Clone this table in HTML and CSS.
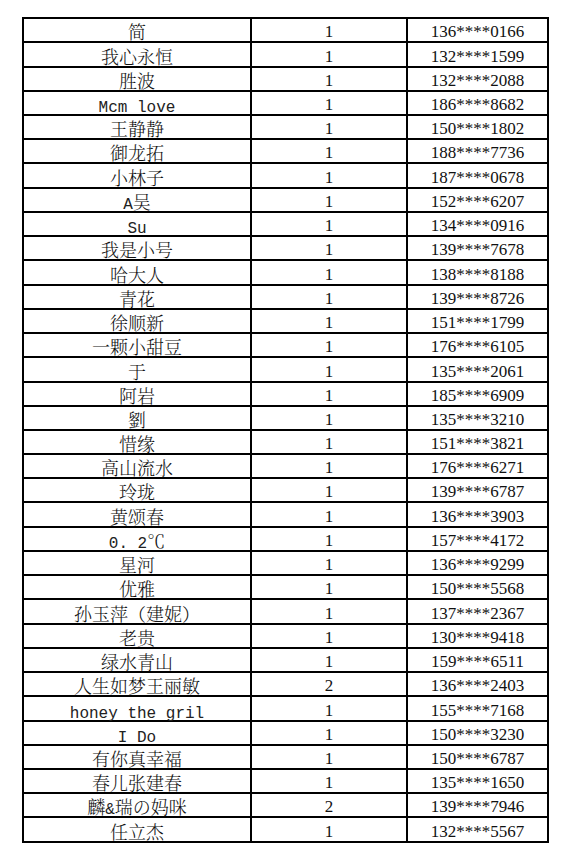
FILE: index.html
```html
<!DOCTYPE html>
<html lang="zh-CN">
<head>
<meta charset="utf-8">
<title>名单</title>
<link rel="stylesheet" href="styles.css">
</head>
<body>
<table class="list">
<colgroup><col class="c1"><col class="c2"><col class="c3"></colgroup>
<tbody>
<tr><td class="name">简</td><td class="num">1</td><td class="num">136****0166</td></tr>
<tr><td class="name">我心永恒</td><td class="num">1</td><td class="num">132****1599</td></tr>
<tr><td class="name">胜波</td><td class="num">1</td><td class="num">132****2088</td></tr>
<tr><td class="name"><span class="lat">Mcm love</span></td><td class="num">1</td><td class="num">186****8682</td></tr>
<tr><td class="name">王静静</td><td class="num">1</td><td class="num">150****1802</td></tr>
<tr><td class="name">御龙拓</td><td class="num">1</td><td class="num">188****7736</td></tr>
<tr><td class="name">小林子</td><td class="num">1</td><td class="num">187****0678</td></tr>
<tr><td class="name"><span class="lat">A</span>吴</td><td class="num">1</td><td class="num">152****6207</td></tr>
<tr><td class="name"><span class="lat">Su</span></td><td class="num">1</td><td class="num">134****0916</td></tr>
<tr><td class="name">我是小号</td><td class="num">1</td><td class="num">139****7678</td></tr>
<tr><td class="name">哈大人</td><td class="num">1</td><td class="num">138****8188</td></tr>
<tr><td class="name">青花</td><td class="num">1</td><td class="num">139****8726</td></tr>
<tr><td class="name">徐顺新</td><td class="num">1</td><td class="num">151****1799</td></tr>
<tr><td class="name">一颗小甜豆</td><td class="num">1</td><td class="num">176****6105</td></tr>
<tr><td class="name">于</td><td class="num">1</td><td class="num">135****2061</td></tr>
<tr><td class="name">阿岩</td><td class="num">1</td><td class="num">185****6909</td></tr>
<tr><td class="name">劉</td><td class="num">1</td><td class="num">135****3210</td></tr>
<tr><td class="name">惜缘</td><td class="num">1</td><td class="num">151****3821</td></tr>
<tr><td class="name">高山流水</td><td class="num">1</td><td class="num">176****6271</td></tr>
<tr><td class="name">玲珑</td><td class="num">1</td><td class="num">139****6787</td></tr>
<tr><td class="name">黄颂春</td><td class="num">1</td><td class="num">136****3903</td></tr>
<tr><td class="name"><span class="lat">0. 2</span>℃</td><td class="num">1</td><td class="num">157****4172</td></tr>
<tr><td class="name">星河</td><td class="num">1</td><td class="num">136****9299</td></tr>
<tr><td class="name">优雅</td><td class="num">1</td><td class="num">150****5568</td></tr>
<tr><td class="name">孙玉萍（建妮）</td><td class="num">1</td><td class="num">137****2367</td></tr>
<tr><td class="name">老贵</td><td class="num">1</td><td class="num">130****9418</td></tr>
<tr><td class="name">绿水青山</td><td class="num">1</td><td class="num">159****6511</td></tr>
<tr><td class="name">人生如梦王丽敏</td><td class="num">2</td><td class="num">136****2403</td></tr>
<tr><td class="name"><span class="lat">honey the gril</span></td><td class="num">1</td><td class="num">155****7168</td></tr>
<tr><td class="name"><span class="lat">I Do</span></td><td class="num">1</td><td class="num">150****3230</td></tr>
<tr><td class="name">有你真幸福</td><td class="num">1</td><td class="num">150****6787</td></tr>
<tr><td class="name">春儿张建春</td><td class="num">1</td><td class="num">135****1650</td></tr>
<tr><td class="name">麟<span class="lat">&amp;</span>瑞の妈咪</td><td class="num">2</td><td class="num">139****7946</td></tr>
<tr><td class="name">任立杰</td><td class="num">1</td><td class="num">132****5567</td></tr>
</tbody>
</table>
</body>
</html>
```
FILE: styles.css
```css
html, body {
  margin: 0;
  padding: 0;
  background: #fff;
}

body {
  padding: 17px 0 0 22px;
}

.list {
  border-collapse: collapse;
  table-layout: fixed;
  width: 527px;
  color: #111;
}

.c1 { width: 228px; }
.c2 { width: 156px; }
.c3 { width: 141px; }

.list td {
  border: 2px solid #000;
  padding: 0;
  height: 22.3px;
  text-align: center;
  vertical-align: bottom;
  white-space: nowrap;
}

.list tr:nth-child(4n) td {
  height: 22px;
}

.name {
  font-family: "Noto Serif CJK SC", "Noto Sans CJK SC", sans-serif;
  font-weight: 300;
  font-size: 18px;
  line-height: 20px;
}

.lat {
  font-family: "Liberation Mono", "DejaVu Sans Mono", monospace;
  font-weight: 400;
  font-size: 16px;
  line-height: 0;
  color: #222;
}

.num {
  font-family: "Liberation Serif", "Times New Roman", serif;
  font-size: 17px;
  line-height: 18px;
}
```
